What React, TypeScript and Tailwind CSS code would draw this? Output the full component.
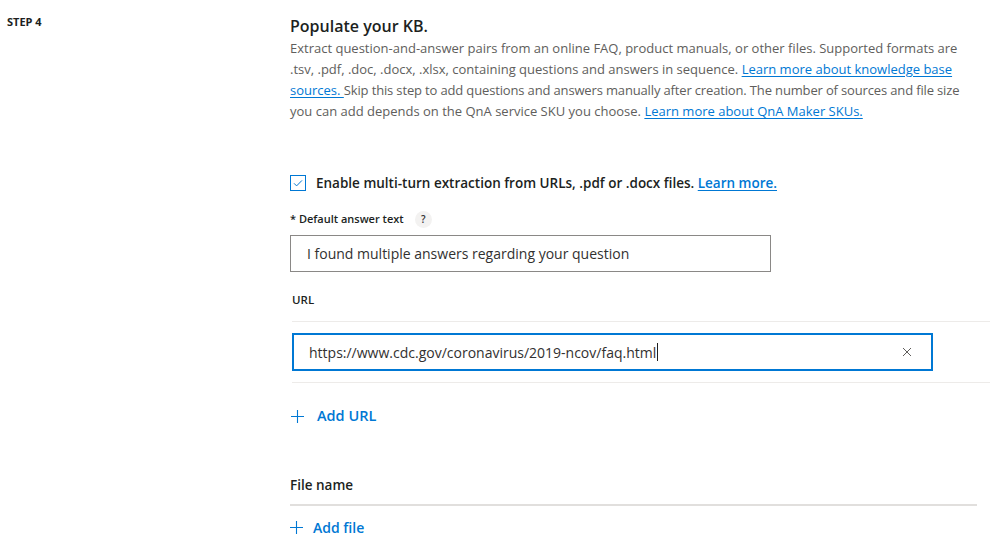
import React from 'react'

function PlusIcon() {
  return (
    <svg width="13" height="13" viewBox="0 0 13 13" className="text-[#0078d4]">
      <path d="M6.5 0v13M0 6.5h13" stroke="currentColor" strokeWidth="1.1" fill="none" />
    </svg>
  )
}

function Link({ children }: { children: React.ReactNode }) {
  return <a className="text-[#0078d4] underline underline-offset-2 cursor-pointer">{children}</a>
}

export default function App() {
  return (
    <div
      className="flex h-[544px] w-full overflow-hidden bg-white text-[#323130]"
      style={{ fontFamily: '"Open Sans", "Noto Sans", sans-serif' }}
    >
      {/* Step label */}
      <div className="w-[290px] shrink-0 pl-[7px] pt-[14px]">
        <div className="text-[11px] font-bold leading-[16px] text-[#201f1e]">STEP 4</div>
      </div>

      {/* Content */}
      <div className="flex-1 pt-[16px]">
        <h2 className="text-[16px] font-semibold leading-[20px] text-[#201f1e]">Populate your KB.</h2>
        <p className="mt-[2px] text-[13px] leading-[21px] text-[#605e5c]">
          Extract question-and-answer pairs from an online FAQ, product manuals, or other files. Supported formats are
          <br />
          .tsv, .pdf, .doc, .docx, .xlsx, containing questions and answers in sequence.{' '}
          <Link>Learn more about knowledge base</Link>
          <br />
          <Link>sources. </Link>
          <span className="tracking-[-0.15px]">
            {' '}Skip this step to add questions and answers manually after creation. The number of sources and file size
          </span>
          <br />
          you can add depends on the QnA service SKU you choose. <Link>Learn more about QnA Maker SKUs.</Link>
        </p>

        {/* Multi-turn checkbox */}
        <label className="mt-[53px] flex h-[16px] items-center gap-[10px]">
          <span className="flex h-[16px] w-[16px] items-center justify-center border border-[#0078d4] bg-white">
            <svg width="12" height="12" viewBox="0 0 12 12">
              <path d="M2 6.3l2.6 2.6L10 3.4" stroke="#0078d4" strokeWidth="1" fill="none" />
            </svg>
          </span>
          <span className="text-[13.5px] font-semibold leading-[16px] text-[#201f1e]">
            Enable multi-turn extraction from URLs, .pdf or .docx files. <Link>Learn more.</Link>
          </span>
        </label>

        {/* Default answer */}
        <div className="mt-[18px] flex h-[20px] items-center gap-[11px]">
          <span className="text-[11px] font-semibold text-[#201f1e]">* Default answer text</span>
          <span className="flex h-[17px] w-[17px] items-center justify-center rounded-full bg-[#f3f2f1] text-[10px] font-semibold text-[#323130]">
            ?
          </span>
        </div>
        <div className="mt-[6px] flex h-[37px] w-[481px] items-center border border-[#8a8886] pl-[16px] text-[14px] text-[#323130]">
          I found multiple answers regarding your question
        </div>

        {/* URL table */}
        <div className="ml-[2px] mt-[18px] w-[698px]">
          <div className="border-b border-[#edebe9] pb-[11px]">
            <div className="text-[11.5px] font-semibold leading-[20px] text-[#201f1e]">URL</div>
          </div>
          <div className="border-b border-[#edebe9] pb-[11px] pt-[11px]">
            <div className="flex h-[38px] w-[641px] items-center border-2 border-[#0078d4] pl-[15px] pr-[19px] text-[14px] text-[#323130]">
              <span className="pt-[1px]">https://www.cdc.gov/coronavirus/2019-ncov/faq.html</span>
              <span className="ml-px h-[18px] w-px bg-[#201f1e]" />
              <span className="flex-1" />
              <svg width="10" height="10" viewBox="0 0 10 10">
                <path d="M1 1l8 8M9 1L1 9" stroke="#605e5c" strokeWidth="1" fill="none" />
              </svg>
            </div>
          </div>
        </div>

        <button className="ml-[1px] mt-[23px] flex h-[20px] items-center gap-[13px] text-[14.5px] font-semibold text-[#0078d4]">
          <PlusIcon />
          <span>Add URL</span>
        </button>

        {/* Files */}
        <div className="mt-[49px] w-[687px] border-b-2 border-[#e1dfdd] pb-[9px]">
          <div className="text-[13.5px] font-semibold leading-[20px] text-[#201f1e]">File name</div>
        </div>
        <button className="mt-[11px] flex h-[20px] items-center gap-[10px] text-[14px] font-semibold text-[#0078d4]">
          <PlusIcon />
          <span>Add file</span>
        </button>
      </div>
    </div>
  )
}
